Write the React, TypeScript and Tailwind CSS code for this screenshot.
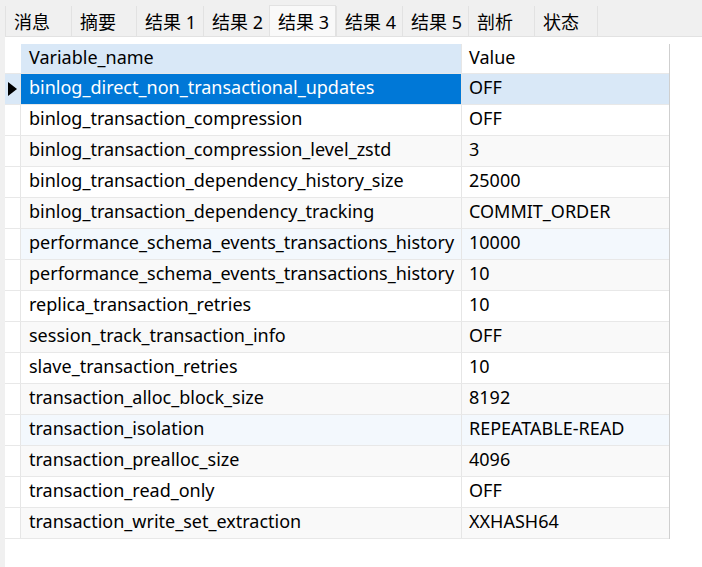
const tabs = ["消息", "摘要", "结果 1", "结果 2", "结果 3", "结果 4", "结果 5", "剖析", "状态"];
const tabWidths = [66, 65, 67, 66, 67, 66, 66, 66, 63];

const rows: [string, string][] = [
  ["binlog_direct_non_transactional_updates", "OFF"],
  ["binlog_transaction_compression", "OFF"],
  ["binlog_transaction_compression_level_zstd", "3"],
  ["binlog_transaction_dependency_history_size", "25000"],
  ["binlog_transaction_dependency_tracking", "COMMIT_ORDER"],
  ["performance_schema_events_transactions_history", "10000"],
  ["performance_schema_events_transactions_history", "10"],
  ["replica_transaction_retries", "10"],
  ["session_track_transaction_info", "OFF"],
  ["slave_transaction_retries", "10"],
  ["transaction_alloc_block_size", "8192"],
  ["transaction_isolation", "REPEATABLE-READ"],
  ["transaction_prealloc_size", "4096"],
  ["transaction_read_only", "OFF"],
  ["transaction_write_set_extraction", "XXHASH64"],
];

function rowBg(i: number) {
  if (i === 5 || i === 11) return "bg-[#f3f8fd]";
  if (i % 2 === 0) return "bg-[#f9f9f9]";
  return "bg-white";
}

export default function App() {
  return (
    <div
      className="flex h-[567px] w-[702px] flex-col bg-[#f0f0f0] pl-[5px] text-[18px] text-black"
      style={{ fontFamily: '"Noto Sans", "Noto Sans CJK SC", sans-serif' }}
    >
      {/* tabs */}
      <div className="flex h-[37px] items-end border-b border-[#e2e2e2] pt-[6px]">
        {tabs.map((t, i) => (
          <div
            key={t}
            style={{ width: tabWidths[i] }}
            className={
              i === 4
                ? "flex h-[31px] items-center border-x border-t border-[#e2e2e2] bg-[#f9f9f9] pt-[2px] pl-[8px]"
                : "flex h-[30px] items-center border-l border-[#e2e2e2] bg-[#f0f0f0] pt-[2px] pl-[8px]"
            }
          >
            {t}
          </div>
        ))}
        <div className="h-[30px] border-l border-[#e2e2e2]" />
      </div>

      {/* grid */}
      <div className="flex-1 bg-white pt-[7px]">
        <div className="flex w-[665px] flex-col border-r border-[#cfcfcf]">
          <div className="flex h-[29px]">
            <div className="w-[16px] bg-white" />
            <div className="flex w-[440px] items-center bg-[#d9e8f7] pb-[2px] pl-[8px]">Variable_name</div>
            <div className="flex flex-1 items-center border-l border-[#e6e6e6] bg-white pb-[2px] pl-[7px]">Value</div>
          </div>
          {rows.map(([name, value], i) => {
            const sel = i === 0;
            return (
              <div key={i} className="flex h-[31px] border-t border-[#e8e8e8]">
                <div
                  className={
                    sel
                      ? "flex w-[16px] items-center justify-center border-r border-[#e6e6e6] bg-[#d9e8f7]"
                      : "w-[16px] border-r border-[#e6e6e6] bg-white"
                  }
                >
                  {sel && (
                    <svg width="9" height="14" viewBox="0 0 9 14">
                      <path d="M0 0 L9 7 L0 14 Z" fill="#000" />
                    </svg>
                  )}
                </div>
                <div
                  className={
                    "flex w-[440px] items-center whitespace-nowrap pb-[3px] pl-[8px] " +
                    (sel ? "bg-[#0078d7] text-white" : rowBg(i))
                  }
                >
                  {name}
                </div>
                <div
                  className={
                    "flex flex-1 items-center border-l border-[#e6e6e6] pb-[3px] pl-[7px] " +
                    (sel ? "bg-[#d9e8f7]" : rowBg(i))
                  }
                >
                  {value}
                </div>
              </div>
            );
          })}
          <div className="h-px bg-[#e8e8e8]" />
        </div>
      </div>
    </div>
  );
}
